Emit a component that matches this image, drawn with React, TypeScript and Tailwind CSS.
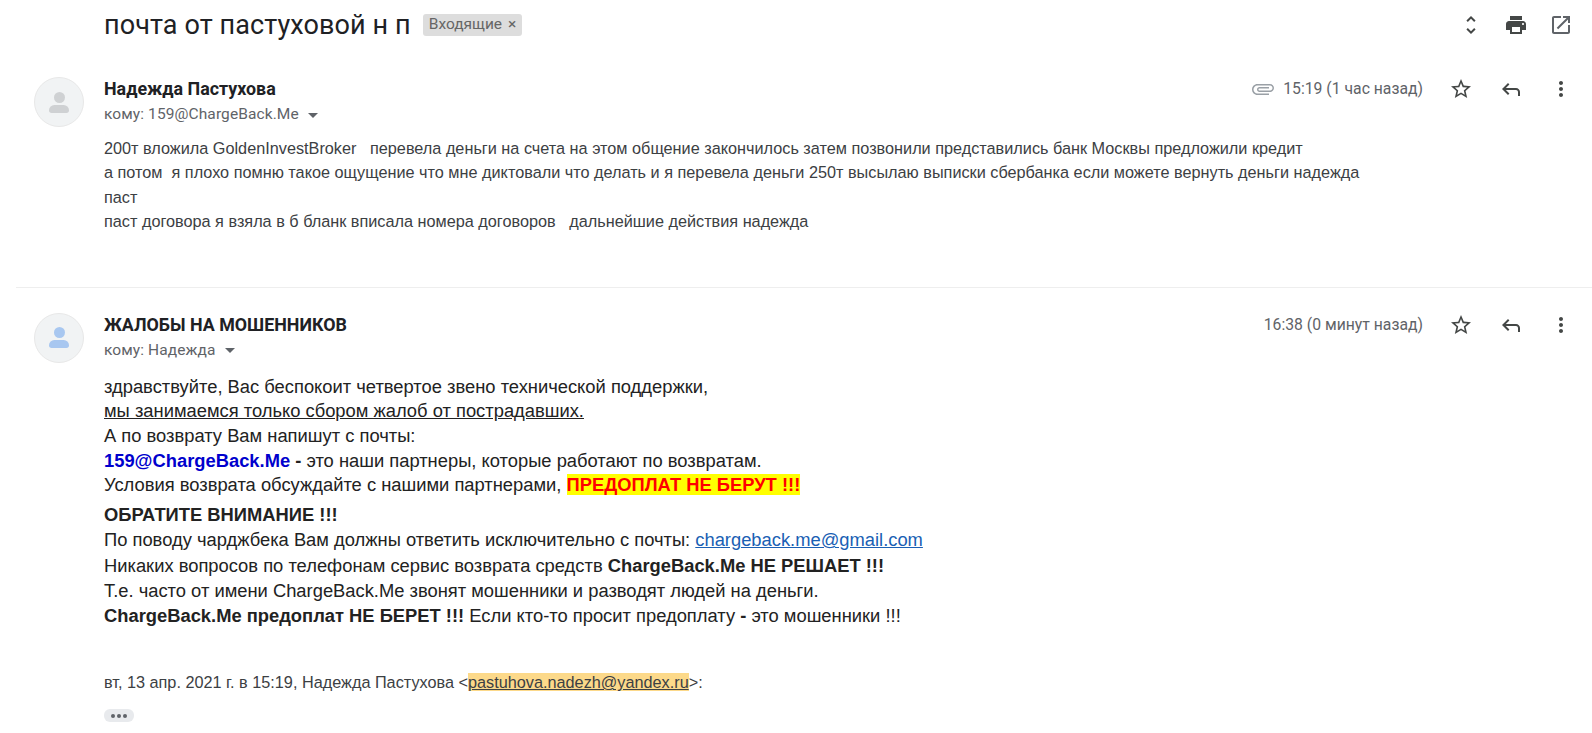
const roboto = "font-['Roboto',sans-serif]";
const arial = "font-['Liberation_Sans',Arial,sans-serif]";

function Icon({ d, className = "" }: { d: string; className?: string }) {
  return (
    <svg viewBox="0 0 24 24" className={className} fill="currentColor">
      <path d={d} />
    </svg>
  );
}

const paths = {
  unfold: "M12 5.83L15.17 9l1.41-1.41L12 3 7.41 7.59 8.83 9 12 5.83zm0 12.34L8.83 15l-1.41 1.41L12 21l4.59-4.59L15.17 15 12 18.17z",
  print: "M19 8H5c-1.66 0-3 1.34-3 3v6h4v4h12v-4h4v-6c0-1.66-1.34-3-3-3zm-3 11H8v-5h8v5zm3-7c-.55 0-1-.45-1-1s.45-1 1-1 1 .45 1 1-.45 1-1 1zm-1-9H6v4h12V3z",
  open: "M19 19H5V5h7V3H5c-1.11 0-2 .9-2 2v14c0 1.1.89 2 2 2h14c1.1 0 2-.9 2-2v-7h-2v7zM14 3v2h3.59l-9.83 9.83 1.41 1.41L19 6.41V10h2V3h-7z",
  star: "M22 9.24l-7.19-.62L12 2 9.19 8.63 2 9.24l5.46 4.73L5.82 21 12 17.27 18.18 21l-1.63-7.03L22 9.24zM12 15.4l-3.76 2.27 1-4.28-3.32-2.88 4.38-.38L12 6.1l1.71 4.04 4.38.38-3.32 2.88 1 4.28L12 15.4z",
  reply: "M21 19v-4c0-2.2-1.8-4-4-4H6.83l3.58-3.59L9 6l-6 6 6 6 1.41-1.41L6.83 13H17c1.1 0 2 .9 2 2v4h2z",
  dots: "M12 8c1.1 0 2-.9 2-2s-.9-2-2-2-2 .9-2 2 .9 2 2 2zm0 2c-1.1 0-2 .9-2 2s.9 2 2 2 2-.9 2-2-.9-2-2-2zm0 6c-1.1 0-2 .9-2 2s.9 2 2 2 2-.9 2-2-.9-2-2-2z",
  clip: "M16.5 6v11.5c0 2.21-1.79 4-4 4s-4-1.79-4-4V5c0-1.38 1.12-2.5 2.5-2.5s2.5 1.12 2.5 2.5v10.5c0 .55-.45 1-1 1s-1-.45-1-1V6H10v9.5c0 1.38 1.12 2.5 2.5 2.5s2.5-1.12 2.5-2.5V5c0-2.21-1.79-4-4-4S7 2.79 7 5v12.5c0 3.04 2.46 5.5 5.5 5.5s5.5-2.46 5.5-5.5V6h-1.5z",
};

function Avatar({ blue }: { blue?: boolean }) {
  const tone = blue ? "bg-[#a8c7f0]" : "bg-[#cfd1d3]";
  return (
    <div className="w-[50px] h-[50px] rounded-full bg-[#f1f3f4] border border-[#e8e8e8] flex flex-col items-center justify-center gap-[2px]">
      <div className={`w-[11px] h-[11px] rounded-full ${tone}`} />
      <div className={`w-[20px] h-[8px] rounded-t-[6px] rounded-b-[3px] ${tone}`} />
    </div>
  );
}

function MessageHead({ name, to, time, clip, blue }: { name: string; to: string; time: string; clip?: boolean; blue?: boolean }) {
  return (
    <div className="flex">
      <div className="w-[104px] pl-[34px] shrink-0">
        <Avatar blue={blue} />
      </div>
      <div className={`flex-1 ${roboto} pt-[1px]`}>
        <div className="text-[17.85px] leading-[22px] font-bold text-[#202124]">{name}</div>
        <div className="mt-[4px] flex items-center text-[15.5px] leading-[20px] text-[#5f6368] tracking-[0.1px]">
          {to}
          <span className="ml-[9px] mt-[2px] border-x-[5px] border-t-[5px] border-x-transparent border-t-[#5f6368]" />
        </div>
      </div>
      <div className={`flex items-start h-[24px] ${roboto} text-[#5f6368]`}>
        {clip && <Icon d={paths.clip} className="w-[24px] h-[24px] rotate-90 text-[#9aa0a6] mr-[8px]" />}
        <span className="text-[15.75px] leading-[24px] mr-[26px]">{time}</span>
        <Icon d={paths.star} className="w-[24px] h-[24px] mr-[26px] text-[#444746]" />
        <Icon d={paths.reply} className="w-[24px] h-[24px] mr-[26px] text-[#444746]" />
        <Icon d={paths.dots} className="w-[24px] h-[24px] mr-[19px] text-[#444746]" />
      </div>
    </div>
  );
}

export default function App() {
  return (
    <div className={`w-[1592px] h-[733px] overflow-hidden bg-white ${arial}`}>
      <div className="flex items-center h-[50px] pl-[104px]">
        <h1 className={`${roboto} text-[27px] font-normal text-[#202124] tracking-[0.1px]`}>почта от пастуховой н п</h1>
        <span className={`ml-[12px] flex items-center h-[22px] px-[6px] rounded-[3px] bg-[#dddddd] ${roboto} text-[15.5px] text-[#666666]`}>
          Входящие <span className="ml-[6px] text-[15.5px]">×</span>
        </span>
        <div className="ml-auto flex items-center text-[#444746]">
          <Icon d={paths.unfold} className="w-[24px] h-[24px] mr-[21px]" />
          <Icon d={paths.print} className="w-[24px] h-[24px] mr-[21px]" />
          <Icon d={paths.open} className="w-[24px] h-[24px] mr-[19px] text-[#5f6368]" />
        </div>
      </div>

      <div className="pt-[27px]">
        <MessageHead name="Надежда Пастухова" to="кому: 159@ChargeBack.Me" time="15:19 (1 час назад)" clip />
        <div className="mt-[9px] pl-[104px] pr-[200px] text-[16.25px] leading-[24.4px] text-[#3c4043] whitespace-pre-wrap">
          <div>200т вложила GoldenInvestBroker   перевела деньги на счета на этом общение закончилось затем позвонили представились банк Москвы предложили кредит</div>
          <div>а потом  я плохо помню такое ощущение что мне диктовали что делать и я перевела деньги 250т высылаю выписки сбербанка если можете вернуть деньги надежда</div>
          <div>паст</div>
          <div>паст договора я взяла в б бланк вписала номера договоров   дальнейшие действия надежда</div>
        </div>
      </div>

      <div className="mt-[53px] ml-[16px] border-t border-[#eeeeee]" />

      <div className="pt-[25px]">
        <MessageHead name="ЖАЛОБЫ НА МОШЕННИКОВ" to="кому: Надежда" time="16:38 (0 минут назад)" blue />
        <div className="mt-[12px] pl-[104px] text-[18.35px] leading-[24.7px] text-[#222222]">
          <div>здравствуйте, Вас беспокоит четвертое звено технической поддержки,</div>
          <div className="underline">мы занимаемся только сбором жалоб от пострадавших.</div>
          <div>А по возврату Вам напишут с почты:</div>
          <div><b className="text-[#0000cd]">159@ChargeBack.Me</b> <b>-</b> это наши партнеры, которые работают по возвратам.</div>
          <div>Условия возврата обсуждайте с нашими партнерами, <b className="text-[#ff0000] bg-[#ffff00]">ПРЕДОПЛАТ НЕ БЕРУТ !!!</b></div>
          <div className="mt-[4px] leading-[25.2px]">
            <div className="font-bold">ОБРАТИТЕ ВНИМАНИЕ !!!</div>
            <div>По поводу чарджбека Вам должны ответить исключительно с почты: <span className="text-[#1a5fb4] underline">chargeback.me@gmail.com</span></div>
            <div>Никаких вопросов по телефонам сервис возврата средств <b>ChargeBack.Me НЕ РЕШАЕТ !!!</b></div>
            <div>Т.е. часто от имени ChargeBack.Me звонят мошенники и разводят людей на деньги.</div>
            <div><b>ChargeBack.Me предоплат НЕ БЕРЕТ !!!</b> Если кто-то просит предоплату <b>-</b> это мошенники !!!</div>
          </div>
        </div>
        <div className="mt-[42px] pl-[104px] text-[16.25px] leading-[24px] text-[#3c4043]">
          вт, 13 апр. 2021 г. в 15:19, Надежда Пастухова &lt;<span className="underline bg-[#fcd98a]">pastuhova.nadezh@yandex.ru</span>&gt;:
        </div>
        <div className="mt-[15px] ml-[104px] w-[30px] h-[13px] rounded-[6px] bg-[#e8eaed] flex items-center justify-center gap-[2px]">
          <span className="w-[4px] h-[4px] rounded-full bg-[#5f6368]" />
          <span className="w-[4px] h-[4px] rounded-full bg-[#5f6368]" />
          <span className="w-[4px] h-[4px] rounded-full bg-[#5f6368]" />
        </div>
      </div>
    </div>
  );
}
